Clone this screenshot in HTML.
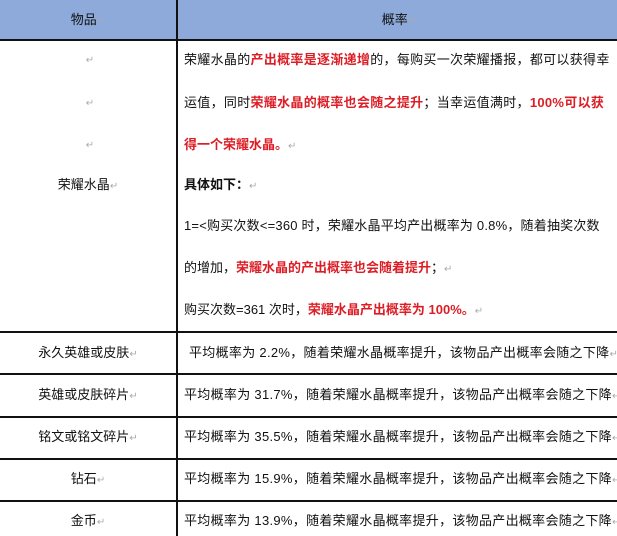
<!DOCTYPE html>
<html><head><meta charset="utf-8"><style>
body{margin:0;width:617px;height:536px;overflow:hidden;background:#fff;font-family:"Liberation Sans","Noto Sans CJK SC",sans-serif;font-size:13px;color:#111;position:relative}
.hd{position:absolute;left:0;top:0;width:617px;height:39px;background:#8eaadb}
.vl{position:absolute;left:176px;top:0;width:2px;height:536px;background:#111}
.hl{position:absolute;left:0;width:617px;height:1.5px;background:#111}
.t{position:absolute;white-space:nowrap;line-height:16px}
.c{transform:translateX(-50%)}
.r{color:#dc1d25;font-weight:bold}
.m{color:#aaa;font-size:10px}
</style></head><body>
<div class="hd"></div>
<div class="vl"></div>
<div class="hl" style="top:39px"></div>
<div class="hl" style="top:331px"></div>
<div class="hl" style="top:373px"></div>
<div class="hl" style="top:416px"></div>
<div class="hl" style="top:458px"></div>
<div class="hl" style="top:500px"></div>
<div class="t c" style="left:88px;top:12px">物品<span class="m">↵</span></div>
<div class="t c" style="left:399px;top:12px">概率<span class="m">↵</span></div>
<div class="t c m" style="left:90px;top:53px">↵</div>
<div class="t c m" style="left:90px;top:96px">↵</div>
<div class="t c m" style="left:90px;top:138px">↵</div>
<div class="t c" style="left:88px;top:177px">荣耀水晶<span class="m">↵</span></div>
<div class="t" style="left:184px;top:52px;letter-spacing:0.3px">荣耀水晶的<span class="r">产出概率是逐渐递增</span>的，每购买一次荣耀播报，都可以获得幸</div>
<div class="t" style="left:184px;top:95px;letter-spacing:0.3px">运值，同时<span class="r">荣耀水晶的概率也会随之提升</span>；当幸运值满时，<span class="r">100%可以获</span></div>
<div class="t" style="left:184px;top:137px"><span class="r">得一个荣耀水晶。</span><span class="m">↵</span></div>
<div class="t" style="left:184px;top:177px"><b>具体如下：</b><span class="m">↵</span></div>
<div class="t" style="left:184px;top:218px;letter-spacing:0.2px">1=&lt;购买次数&lt;=360 时，荣耀水晶平均产出概率为 0.8%，随着抽奖次数</div>
<div class="t" style="left:184px;top:260px">的增加，<span class="r">荣耀水晶的产出概率也会随着提升</span>；<span class="m">↵</span></div>
<div class="t" style="left:184px;top:302px">购买次数=361 次时，<span class="r">荣耀水晶产出概率为 100%。</span><span class="m">↵</span></div>
<div class="t c" style="left:88px;top:345px">永久英雄或皮肤<span class="m">↵</span></div>
<div class="t" style="left:189px;top:345px;letter-spacing:0.3px">平均概率为 2.2%，随着荣耀水晶概率提升，该物品产出概率会随之下降<span class="m">↵</span></div>
<div class="t c" style="left:88px;top:387px">英雄或皮肤碎片<span class="m">↵</span></div>
<div class="t" style="left:184px;top:387px;letter-spacing:0.3px">平均概率为 31.7%，随着荣耀水晶概率提升，该物品产出概率会随之下降<span class="m">↵</span></div>
<div class="t c" style="left:88px;top:429px">铭文或铭文碎片<span class="m">↵</span></div>
<div class="t" style="left:184px;top:429px;letter-spacing:0.3px">平均概率为 35.5%，随着荣耀水晶概率提升，该物品产出概率会随之下降<span class="m">↵</span></div>
<div class="t c" style="left:88px;top:471px">钻石<span class="m">↵</span></div>
<div class="t" style="left:184px;top:471px;letter-spacing:0.3px">平均概率为 15.9%，随着荣耀水晶概率提升，该物品产出概率会随之下降<span class="m">↵</span></div>
<div class="t c" style="left:88px;top:513px">金币<span class="m">↵</span></div>
<div class="t" style="left:184px;top:513px;letter-spacing:0.3px">平均概率为 13.9%，随着荣耀水晶概率提升，该物品产出概率会随之下降<span class="m">↵</span></div>
</body></html>
